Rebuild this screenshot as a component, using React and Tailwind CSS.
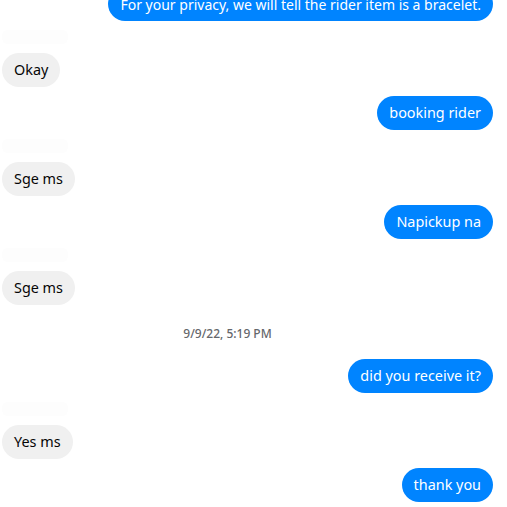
const messages = [
  { side: "right", text: "For your privacy, we will tell the rider item is a bracelet.", small: true },
  { side: "left", text: "Okay" },
  { side: "right", text: "booking rider" },
  { side: "left", text: "Sge ms" },
  { side: "right", text: "Napickup na" },
  { side: "left", text: "Sge ms" },
  { side: "time", text: "9/9/22, 5:19 PM" },
  { side: "right", text: "did you receive it?" },
  { side: "left", text: "Yes ms" },
  { side: "right", text: "thank you" },
];

function Bubble({ msg }) {
  if (msg.side === "time") {
    return (
      <div className="flex justify-center pr-[54px] pt-[12px] pb-[8px]">
        <span className="text-[12px] leading-[16px] font-medium text-[#65676b]">
          {msg.text}
        </span>
      </div>
    );
  }
  if (msg.side === "left") {
    return (
      <div className="flex flex-col items-start">
        <div className="w-[66px] h-[14px] bg-[#fdfdfd] rounded-md mb-[9px]" />
        <div className="bg-[#f0f0f0] text-[#050505] rounded-[18px] px-[12px] h-[34px] flex items-center text-[14.4px]">
          {msg.text}
        </div>
      </div>
    );
  }
  return (
    <div className="flex justify-end pr-[14px]">
      <div
        className={
          msg.small
            ? "bg-[#0084ff] text-white rounded-[18px] px-[12px] h-[34px] flex items-center text-[14px]"
            : "bg-[#0084ff] text-white rounded-[18px] px-[12px] h-[34px] flex items-center text-[14.4px]"
        }
      >
        {msg.text}
      </div>
    </div>
  );
}

export default function App() {
  return (
    <div
      className="w-[507px] h-[507px] overflow-hidden bg-white"
      style={{ fontFamily: '"Noto Sans", "Open Sans", sans-serif' }}
    >
      <div className="flex flex-col gap-[9px] pl-[2px] -mt-[13px]">
        {messages.map((m, i) => (
          <Bubble key={i} msg={m} />
        ))}
      </div>
    </div>
  );
}
